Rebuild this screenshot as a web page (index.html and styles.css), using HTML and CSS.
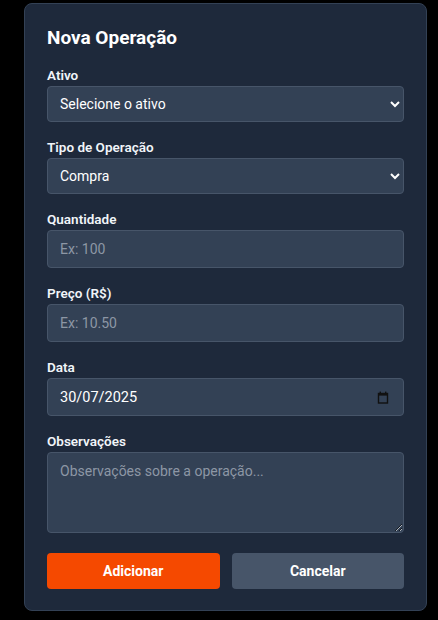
FILE: index.html
```html
<!DOCTYPE html>
<html lang="pt-BR">
<head>
<meta charset="utf-8">
<title>Nova Operação</title>
<link rel="stylesheet" href="styles.css">
</head>
<body>
<form class="card">
  <h2 class="title">Nova Operação</h2>
  <div class="field">
    <label class="label" for="ativo">Ativo</label>
    <select id="ativo" class="control select">
      <option>Selecione o ativo</option>
    </select>
  </div>
  <div class="field">
    <label class="label" for="tipo">Tipo de Operação</label>
    <select id="tipo" class="control select">
      <option>Compra</option>
      <option>Venda</option>
    </select>
  </div>
  <div class="field">
    <label class="label" for="qtd">Quantidade</label>
    <input id="qtd" class="control input" type="number" placeholder="Ex: 100">
  </div>
  <div class="field">
    <label class="label" for="preco">Preço (R$)</label>
    <input id="preco" class="control input" type="number" placeholder="Ex: 10.50">
  </div>
  <div class="field">
    <label class="label" for="data">Data</label>
    <div class="control date">
      <input id="data" class="date-text" type="text" value="30/07/2025">
      <svg class="date-icon" width="12" height="13" viewBox="0 0 12 13" aria-hidden="true">
        <rect x="1.5" y="2.5" width="9" height="9.5" fill="none" stroke="#111" stroke-width="1.4"/>
        <rect x="1" y="2" width="10" height="2.6" fill="#111"/>
        <rect x="2.6" y="0.6" width="1.4" height="2" fill="#111"/>
        <rect x="8" y="0.6" width="1.4" height="2" fill="#111"/>
      </svg>
    </div>
  </div>
  <div class="field">
    <label class="label" for="obs">Observações</label>
    <textarea id="obs" class="control textarea" placeholder="Observações sobre a operação..."></textarea>
  </div>
  <div class="actions">
    <button type="button" class="btn btn-primary">Adicionar</button>
    <button type="button" class="btn btn-secondary">Cancelar</button>
  </div>
</form>
</body>
</html>
```

FILE: styles.css
```css
* {
  box-sizing: border-box;
}

html, body {
  margin: 0;
  padding: 0;
  background: #000;
}

body {
  font-family: Roboto, "Noto Sans", "Liberation Sans", sans-serif;
  color: #fff;
  padding: 3px 0 0 24px;
}

.card {
  width: 403px;
  background: #1e293b;
  border: 1px solid #334155;
  border-radius: 8px;
  padding: 20px 22px 21px 22px;
}

.title {
  margin: 0 0 14px 0;
  font-size: 19px;
  line-height: 28px;
  font-weight: 700;
  color: #fff;
}

.field {
  display: flex;
  flex-direction: column;
  margin-bottom: 16px;
}

.label {
  font-size: 13.5px;
  line-height: 18px;
  margin-bottom: 2px;
  font-weight: 600;
  color: #f1f5f9;
}

.control {
  width: 100%;
  margin: 0;
  font-family: inherit;
  font-size: 14px;
  color: #fff;
  background: #334155;
  border: 1px solid #475569;
  border-radius: 4px;
  outline: none;
}

.select {
  height: 36px;
  padding: 0 8px;
}

.input {
  height: 38px;
  padding: 0 12px;
}

.control::placeholder {
  color: #8d97a5;
  opacity: 1;
}

.date {
  height: 38px;
  display: flex;
  align-items: center;
  padding: 0 14px 0 12px;
  gap: 8px;
}

.date-text {
  flex: 1;
  min-width: 0;
  height: 100%;
  padding: 0;
  border: 0;
  background: transparent;
  font-family: inherit;
  font-size: 14.5px;
  color: #fff;
  outline: none;
}

.date-icon {
  flex: none;
  display: block;
}

.textarea {
  height: 81px;
  padding: 8px 12px;
  line-height: 20px;
  resize: vertical;
  display: block;
}

.actions {
  display: flex;
  gap: 12px;
  margin-top: 20px;
}

.btn {
  flex: 1;
  height: 36px;
  border: 0;
  border-radius: 4px;
  font-family: inherit;
  font-size: 14px;
  font-weight: 700;
  color: #fff;
  cursor: pointer;
}

.btn-primary {
  background: #f54900;
}

.btn-secondary {
  background: #475569;
}
```
